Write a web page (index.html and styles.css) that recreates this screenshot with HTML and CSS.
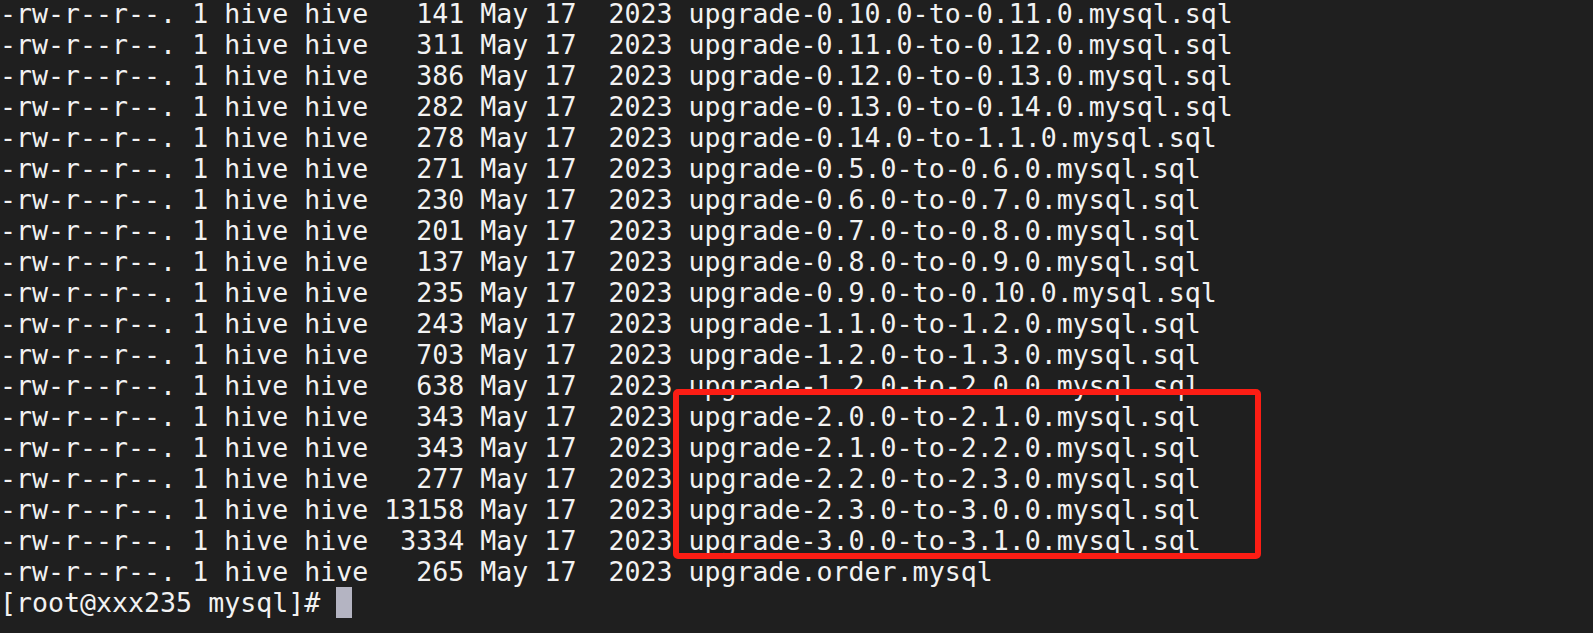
FILE: index.html
```
<!DOCTYPE html>
<html lang="en">
<head>
    <meta charset="UTF-8">
    <meta name="viewport" content="width=device-width, initial-scale=1.0">
    <title>mysql scripts</title>
    <link rel="stylesheet" href="styles.css">
</head>
<body>

    <div class="terminal">
<pre class="output">-rw-r--r--. 1 hive hive   141 May 17  2023 upgrade-0.10.0-to-0.11.0.mysql.sql
-rw-r--r--. 1 hive hive   311 May 17  2023 upgrade-0.11.0-to-0.12.0.mysql.sql
-rw-r--r--. 1 hive hive   386 May 17  2023 upgrade-0.12.0-to-0.13.0.mysql.sql
-rw-r--r--. 1 hive hive   282 May 17  2023 upgrade-0.13.0-to-0.14.0.mysql.sql
-rw-r--r--. 1 hive hive   278 May 17  2023 upgrade-0.14.0-to-1.1.0.mysql.sql
-rw-r--r--. 1 hive hive   271 May 17  2023 upgrade-0.5.0-to-0.6.0.mysql.sql
-rw-r--r--. 1 hive hive   230 May 17  2023 upgrade-0.6.0-to-0.7.0.mysql.sql
-rw-r--r--. 1 hive hive   201 May 17  2023 upgrade-0.7.0-to-0.8.0.mysql.sql
-rw-r--r--. 1 hive hive   137 May 17  2023 upgrade-0.8.0-to-0.9.0.mysql.sql
-rw-r--r--. 1 hive hive   235 May 17  2023 upgrade-0.9.0-to-0.10.0.mysql.sql
-rw-r--r--. 1 hive hive   243 May 17  2023 upgrade-1.1.0-to-1.2.0.mysql.sql
-rw-r--r--. 1 hive hive   703 May 17  2023 upgrade-1.2.0-to-1.3.0.mysql.sql
-rw-r--r--. 1 hive hive   638 May 17  2023 upgrade-1.2.0-to-2.0.0.mysql.sql
-rw-r--r--. 1 hive hive   343 May 17  2023 upgrade-2.0.0-to-2.1.0.mysql.sql
-rw-r--r--. 1 hive hive   343 May 17  2023 upgrade-2.1.0-to-2.2.0.mysql.sql
-rw-r--r--. 1 hive hive   277 May 17  2023 upgrade-2.2.0-to-2.3.0.mysql.sql
-rw-r--r--. 1 hive hive 13158 May 17  2023 upgrade-2.3.0-to-3.0.0.mysql.sql
-rw-r--r--. 1 hive hive  3334 May 17  2023 upgrade-3.0.0-to-3.1.0.mysql.sql
-rw-r--r--. 1 hive hive   265 May 17  2023 upgrade.order.mysql
[root@xxx235 mysql]# <span class="cursor"> </span></pre>

        <!-- highlight over the 2.x / 3.x upgrade scripts -->
        <div class="highlight"></div>
    </div>

</body>
</html>
```

FILE: styles.css
```
html, body {
    margin: 0;
    padding: 0;
    background-color: #1f1f1f;
    height: 100%;
    overflow: hidden;
}

.terminal {
    position: relative;
    height: 100%;
}

.output {
    margin: -2px 0 0 0;
    padding: 0;
    font-family: "DejaVu Sans Mono", "Liberation Mono", monospace;
    font-size: 26.6px;
    line-height: 31px;
    color: #f2f2f2;
    white-space: pre;
}

    .output .cursor {
        display: inline-block;
        width: 16px;
        height: 31px;
        vertical-align: top;
        background: #b4b4c2;
    }

.highlight {
    position: absolute;
    left: 673px;
    top: 391px;
    width: 576px;
    height: 158px;
    border: 6px solid #fc1d14;
    border-radius: 5px;
}
```
